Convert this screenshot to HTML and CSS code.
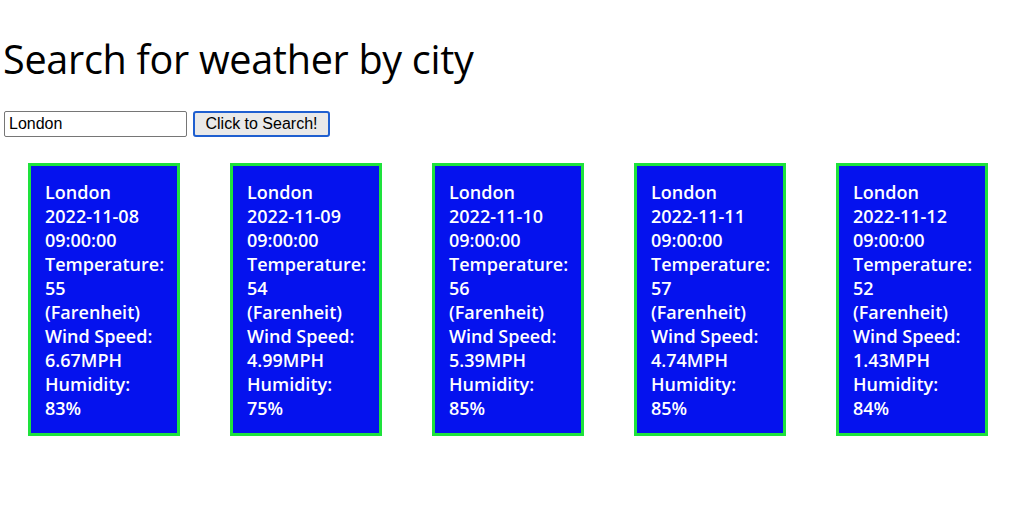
FILE: index.html
```html
<!DOCTYPE html>
<html>
<head>
<meta charset="utf-8">
<title>Weather</title>
<link rel="stylesheet" href="styles.css">
</head>
<body>
<h1 class="title">Search for weather by city</h1>
<div class="search">
  <input class="search-input" type="text" value="London">
  <button class="search-btn">Click to Search!</button>
</div>
<div class="cards">
  <div class="card">
    <div>London</div><div>2022-11-08</div><div>09:00:00</div><div>Temperature:</div><div>55</div><div>(Farenheit)</div><div>Wind Speed:</div><div>6.67MPH</div><div>Humidity:</div><div>83%</div>
  </div>
  <div class="card">
    <div>London</div><div>2022-11-09</div><div>09:00:00</div><div>Temperature:</div><div>54</div><div>(Farenheit)</div><div>Wind Speed:</div><div>4.99MPH</div><div>Humidity:</div><div>75%</div>
  </div>
  <div class="card">
    <div>London</div><div>2022-11-10</div><div>09:00:00</div><div>Temperature:</div><div>56</div><div>(Farenheit)</div><div>Wind Speed:</div><div>5.39MPH</div><div>Humidity:</div><div>85%</div>
  </div>
  <div class="card">
    <div>London</div><div>2022-11-11</div><div>09:00:00</div><div>Temperature:</div><div>57</div><div>(Farenheit)</div><div>Wind Speed:</div><div>4.74MPH</div><div>Humidity:</div><div>85%</div>
  </div>
  <div class="card">
    <div>London</div><div>2022-11-12</div><div>09:00:00</div><div>Temperature:</div><div>52</div><div>(Farenheit)</div><div>Wind Speed:</div><div>1.43MPH</div><div>Humidity:</div><div>84%</div>
  </div>
</div>
</body>
</html>
```
FILE: styles.css
```css
html, body {
  margin: 0;
  padding: 0;
  background: #ffffff;
}
body {
  padding: 0 3px;
  font-family: "Open Sans", "Noto Sans", sans-serif;
}
.title {
  margin: 0;
  padding-top: 33px;
  font-size: 39.6px;
  line-height: 52px;
  font-weight: 400;
  color: #000;
  letter-spacing: -0.3px;
}
.search {
  display: flex;
  align-items: center;
  gap: 6px;
  margin-top: 26px;
  padding-left: 1px;
}
.search-input {
  box-sizing: border-box;
  width: 183px;
  height: 26px;
  margin: 0;
  padding: 0 4px;
  border: 1px solid #767676;
  border-radius: 2px;
  font-family: "Liberation Sans", Arial, sans-serif;
  font-size: 16px;
  color: #000;
}
.search-btn {
  box-sizing: border-box;
  height: 26px;
  width: 137px;
  margin: 0;
  padding: 0 8px;
  border: 2px solid #1f5fd0;
  border-radius: 3px;
  background: #e9e9e9;
  font-family: "Liberation Sans", Arial, sans-serif;
  font-size: 16px;
  color: #000;
}
.cards {
  display: flex;
  gap: 50px;
  margin-top: 26px;
  padding-left: 25px;
}
.card {
  box-sizing: border-box;
  width: 152px;
  padding: 14px 10px 13px 14px;
  background: #0512ee;
  border: 3px solid #1ee23c;
  color: #fff;
  font-size: 18px;
  line-height: 24px;
  font-weight: 600;
  white-space: nowrap;
}
```
